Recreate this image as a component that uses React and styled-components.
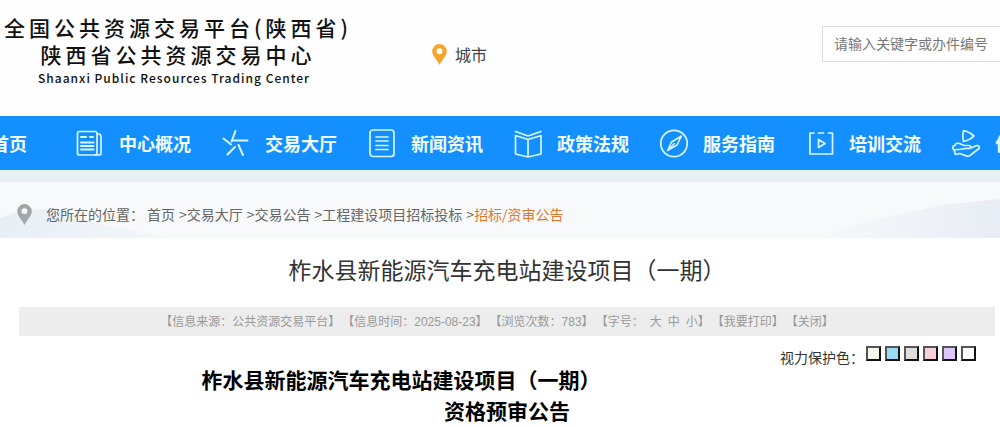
import React from "react";
import styled, { createGlobalStyle } from "styled-components";

const GlobalStyle = createGlobalStyle`
  * { box-sizing: border-box; }
  body {
    margin: 0;
    background: #fff;
    color: #333;
    font-family: "Noto Sans CJK SC", sans-serif;
    font-size: 14px;
    overflow-x: hidden;
  }
  a { color: inherit; text-decoration: none; }
  ul, ol { list-style: none; margin: 0; padding: 0; }
`;

const Header = styled.header`
  display: flex;
  align-items: flex-start;
  height: 116px;
  padding-top: 14px;
  background: #fefefe;
`;

const Logo = styled.a`
  display: flex;
  flex-direction: column;
  align-items: center;
  flex: none;
  width: 356px;
  color: #111;
  font-weight: 500;
  white-space: nowrap;
`;

const LogoLine = styled.span`
  font-size: 21px;
  line-height: 27px;
  letter-spacing: 4px;
`;

const LogoLatin = styled.span`
  padding-right: 8px;
  font-size: 12px;
  line-height: 20px;
  letter-spacing: 1px;
`;

const City = styled.a`
  display: flex;
  align-items: center;
  gap: 8px;
  margin: 28px 0 0 76px;
  font-size: 16px;
  line-height: 24px;
  color: #444;
`;

const Search = styled.form`
  flex: none;
  width: 178px;
  margin: 12px 0 0 auto;
`;

const SearchInput = styled.input`
  display: block;
  width: 100%;
  height: 36px;
  padding: 0 0 2px 11px;
  border: 1px solid #ddd;
  border-right: 0;
  border-radius: 0;
  background: #fff;
  font: inherit;
  color: #333;
  &::placeholder { color: #777; }
`;

const Nav = styled.nav`
  overflow: hidden;
  background: #148ffe;
  color: #f2fdff;
`;

const NavList = styled.ul`
  display: flex;
  gap: 31px;
  height: 54px;
`;

const NavItem = styled.li`
  flex: none;
  margin: ${(p) => (p.$home ? "0 18px 0 -9px" : "0")};
`;

const NavLink = styled.a`
  display: flex;
  align-items: center;
  gap: 15px;
  height: 100%;
  font-size: 18px;
  font-weight: 700;
  white-space: nowrap;
`;

const NavIcon = styled.svg`
  width: 28px;
  height: 30px;
  fill: none;
  stroke: #d8f6ff;
  stroke-width: 1.7;
  stroke-linecap: round;
  stroke-linejoin: round;
`;

const Crumbs = styled.nav`
  position: relative;
  display: flex;
  align-items: center;
  gap: 14px;
  height: 68px;
  padding: 8px 0 0 17px;
  border-top: 12px solid #e7f0f5;
  background: #f8f9fa;
  color: #666;
  white-space: nowrap;
  line-height: 20px;
`;

const Scenery = styled.svg`
  position: absolute;
  inset: 0;
  width: 100%;
  height: 100%;
`;

const Trail = styled.ol`
  position: relative;
  display: flex;
`;

const Crumb = styled.li`
  color: ${(p) => (p.$current ? "#e0772f" : "inherit")};
  &:first-child { margin-right: 3px; }
`;

const Separator = styled.span`
  margin-left: 4px;
  color: #666;
`;

const PinMark = styled.svg`
  position: relative;
  flex: none;
  width: 15px;
  height: 21px;
`;

const Article = styled.main`
  padding: 13px 5px 0 19px;
`;

const Title = styled.h1`
  margin: 0;
  font-size: 23px;
  line-height: 36px;
  font-weight: 400;
  text-align: center;
`;

const Meta = styled.ul`
  display: flex;
  flex-wrap: wrap;
  justify-content: center;
  gap: 0 2px;
  margin-top: 20px;
  padding: 2px 20px 0 0;
  background: #ededed;
  color: #999;
  font-family: "Liberation Sans", "Noto Sans CJK SC", sans-serif;
  font-size: 12px;
  line-height: 27px;
`;

const SizeLink = styled.a`
  margin-left: 6px;
`;

const EyeCare = styled.div`
  display: flex;
  justify-content: flex-end;
  gap: 2px;
  height: 28px;
  padding: 10px 19px 0 0;
  line-height: 22px;
`;

const Swatches = styled.div`
  display: flex;
  gap: 4px;
`;

const Swatch = styled.button`
  width: 15px;
  height: 15px;
  padding: 0;
  border: 2px solid;
  border-color: #555 #111 #111 #555;
  border-radius: 0;
  background: ${(p) => p.$color};
`;

const Notice = styled.h2`
  margin: 0;
  color: #000;
  font-size: 21px;
  line-height: 31px;
  font-weight: 700;
  text-align: center;
`;

const NoticeProject = styled.span`
  display: block;
  padding-right: 212px;
`;

const NAV = [
  {
    label: "中心概况",
    icon: (
      <>
        <rect x="1.5" y="3.5" width="19.5" height="23.5" rx="2" />
        <path d="M21 6h2.5q1.500 1 1.500 2.500V25q0 2-2 2h-4" />
        <path d="M5 9h5M14 9h3M5 14.500h12.500M5 18h12.500M5 21.500h12.500" strokeWidth="2" />
      </>
    ),
  },
  {
    label: "交易大厅",
    icon: <path d="M13.500 3L9.500 13.500M1.500 10.500L9 16.500M11.500 12.500H25.500M16.500 17L21 27M13 19L5.500 26.500" strokeWidth="2" />,
  },
  {
    label: "新闻资讯",
    icon: (
      <>
        <rect x="2" y="2" width="24" height="26.500" rx="3" />
        <path d="M8 9h12M8 13h12M8 17.500h12M8 21.500h12" />
      </>
    ),
  },
  {
    label: "政策法规",
    icon: (
      <>
        <path d="M1.500 3.500L14 8L27 3.500" />
        <path d="M1.500 7.500L14 11.500L27 7.500V26L14 29L1.500 26ZM14 11.500V28.500" />
      </>
    ),
  },
  {
    label: "服务指南",
    icon: (
      <>
        <circle cx="14" cy="15.500" r="13.200" />
        <path d="M7.500 22.500L11.500 14L21.500 8L17 17ZM7.500 22.500L14.500 15.500" strokeWidth="1.500" />
      </>
    ),
  },
  {
    label: "培训交流",
    icon: (
      <>
        <path d="M8 5H4V26H26.500V5H22.500M12.500 5H17.500" />
        <path d="M12.500 11.500V19.500L19 15.500Z" />
      </>
    ),
  },
  {
    label: "信用信息",
    icon: (
      <>
        <path d="M11.500 2.500Q10 8 11.500 13.500Q18 12 22 8Q17 3.500 11.500 2.500Z" />
        <path d="M2 22Q-1 18 3 17.500Q3.500 14.500 7.500 15.500L12 17.500H17Q20.500 18.500 18 20.500H12M19 20L24.500 17.500Q28.500 17.500 27 20.500L18 27.500Q15.500 29 12 27L7.500 25.500L3.500 26.500L2 22Z" />
      </>
    ),
  },
];

const TRAIL = ["首页", "交易大厅", "交易公告", "工程建设项目招标投标"];

const SWATCHES = [
  ["杏仁黄", "#f7f6ec"],
  ["天空蓝", "#9bdaf4"],
  ["银河灰", "#dcdcdc"],
  ["胭脂红", "#f8d0d9"],
  ["葛巾紫", "#dcc5f8"],
  ["白色", "#ffffff"],
];

function Pin({ color }) {
  return (
    <PinMark viewBox="0 0 15 21" aria-hidden="true">
      <path
        fill={color}
        fillRule="evenodd"
        d="M7.500 0A7.300 7.300 0 0 0 .2 7.300C.2 12 5 15.500 7.500 21C10 15.500 14.800 12 14.800 7.300A7.300 7.300 0 0 0 7.500 0ZM7.500 4.200A3 3 0 1 1 7.500 10.200A3 3 0 1 1 7.500 4.200Z"
      />
    </PinMark>
  );
}

export default function App() {
  return (
    <>
      <GlobalStyle />
      <Header>
        <Logo href="#">
          <LogoLine>全国公共资源交易平台(陕西省)</LogoLine>
          <LogoLine>陕西省公共资源交易中心</LogoLine>
          <LogoLatin>Shaanxi Public Resources Trading Center</LogoLatin>
        </Logo>
        <City href="#">
          <Pin color="#f5a52c" />
          城市
        </City>
        <Search>
          <SearchInput type="text" aria-label="搜索" placeholder="请输入关键字或办件编号" />
        </Search>
      </Header>

      <Nav>
        <NavList>
          <NavItem $home>
            <NavLink href="#">首页</NavLink>
          </NavItem>
          {NAV.map((item) => (
            <NavItem key={item.label}>
              <NavLink href="#">
                <NavIcon viewBox="0 0 28 30" aria-hidden="true">{item.icon}</NavIcon>
                {item.label}
              </NavLink>
            </NavItem>
          ))}
        </NavList>
      </Nav>

      <Crumbs>
        <Scenery viewBox="0 0 1000 56" preserveAspectRatio="none" aria-hidden="true">
          <defs>
            <linearGradient id="hillLeft" x1="0" x2="1" y1="0" y2="0">
              <stop offset="0" stopColor="#e6eff5" />
              <stop offset="1" stopColor="#f4f7fa" />
            </linearGradient>
            <linearGradient id="hillRight" x1="0" x2="1" y1="0" y2="0">
              <stop offset="0" stopColor="#f6f8fa" />
              <stop offset="1" stopColor="#e8edf5" />
            </linearGradient>
          </defs>
          <path fill="url(#hillLeft)" d="M0 36Q30 25 52 28T96 42Q120 45 140 50L172 56H0Z" />
          <path fill="url(#hillRight)" d="M820 56Q860 40 900 32T950 22Q975 20 1000 17V56Z" />
        </Scenery>
        <Pin color="#a3a6a8" />
        <Trail>
          <Crumb>您所在的位置：</Crumb>
          {TRAIL.map((name) => (
            <Crumb key={name}>
              <a href="#">{name}</a>
              <Separator>&gt;</Separator>
            </Crumb>
          ))}
          <Crumb $current>
            <a href="#">招标/资审公告</a>
          </Crumb>
        </Trail>
      </Crumbs>

      <Article>
        <Title>柞水县新能源汽车充电站建设项目（一期）</Title>
        <Meta>
          <li>【信息来源：公共资源交易平台】</li>
          <li>【信息时间：2025-08-23】</li>
          <li>【浏览次数：783】</li>
          <li>
            【字号：<SizeLink href="#">大</SizeLink>
            <SizeLink href="#">中</SizeLink>
            <SizeLink href="#">小</SizeLink>】
          </li>
          <li>【<a href="#">我要打印</a>】</li>
          <li>【<a href="#">关闭</a>】</li>
        </Meta>
        <EyeCare>
          视力保护色：
          <Swatches>
            {SWATCHES.map(([name, color]) => (
              <Swatch key={name} type="button" aria-label={name} $color={color} />
            ))}
          </Swatches>
        </EyeCare>
        <Notice>
          <NoticeProject>柞水县新能源汽车充电站建设项目（一期）</NoticeProject>
          资格预审公告
        </Notice>
      </Article>
    </>
  );
}
